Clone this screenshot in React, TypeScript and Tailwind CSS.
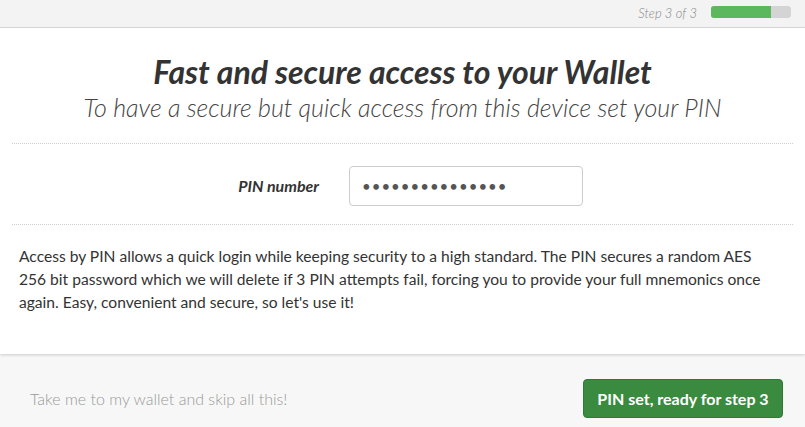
const font = { fontFamily: "Lato, 'Noto Sans', sans-serif" }

export default function App() {
  return (
    <div className="w-[805px] h-[427px] flex flex-col bg-[#f7f7f7] text-[#333]" style={font}>
      {/* step header */}
      <div className="h-[28px] shrink-0 flex items-center justify-end gap-[14px] pr-[14px] bg-[#f3f3f3] border-b border-[#dcdcdc]">
        <span className="text-[13px] italic font-light text-[#888]">Step 3 of 3</span>
        <div className="w-[80px] h-[12px] rounded-[3px] bg-[#d4d4d4] overflow-hidden mb-[4px]">
          <div className="h-full w-3/4 bg-[#5cb85c]" />
        </div>
      </div>

      {/* main card */}
      <div className="bg-white h-[326px] shrink-0 px-[12px] shadow-[0_1px_3px_rgba(0,0,0,0.18)] relative z-10">
        <div className="pt-[25px] pb-[19px] text-center border-b border-dotted border-[#cfcfcf]">
          <h1 className="text-[32px] leading-[38px] font-bold italic text-[#333]">
            Fast and secure access to your Wallet
          </h1>
          <p className="text-[25px] leading-[33px] font-light italic text-[#444]">
            To have a secure but quick access from this device set your PIN
          </p>
        </div>

        <div className="h-[81px] flex items-center pt-[3px] border-b border-dotted border-[#cfcfcf]">
          <label className="w-[337px] text-right pr-[30px] text-[16px] font-bold italic text-[#333]">
            PIN number
          </label>
          <input
            type="password"
            defaultValue="123456789012345"
            className="w-[234px] h-[40px] rounded-[4px] border border-[#ccc] px-[12px] text-[15px] text-[#555] tracking-[1px] outline-none"
          />
        </div>

        <p className="pt-[20px] pl-[7px] pr-[20px] text-[15.6px] leading-[23px] text-[#333]">
          Access by PIN allows a quick login while keeping security to a high standard. The PIN secures a random AES 256 bit password which we will delete if 3 PIN attempts fail, forcing you to provide your full mnemonics once again. Easy, convenient and secure, so let's use it!
        </p>
      </div>

      {/* footer */}
      <div className="flex-1 flex items-center justify-between pl-[30px] pr-[22px] pt-[16px]">
        <span className="text-[16px] font-light text-[#999]">Take me to my wallet and skip all this!</span>
        <button className="w-[200px] h-[39px] rounded-[4px] bg-[#3a8b3f] border border-[#2f7a34] text-white text-[16px] font-bold">
          PIN set, ready for step 3
        </button>
      </div>
    </div>
  )
}
